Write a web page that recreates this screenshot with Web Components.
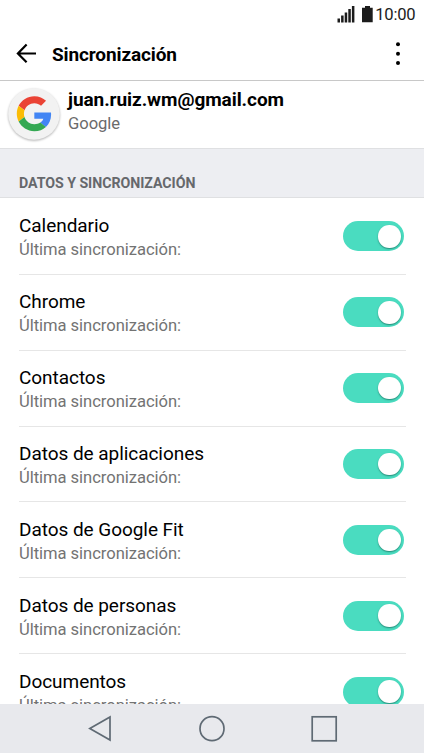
<!DOCTYPE html>
<html lang="es">
<head>
<meta charset="utf-8">
<title>Sincronización</title>
<style>
body {
    margin: 0;
    height: 753px;
    overflow: hidden;
    background: #fff;
    font-family: Roboto, "Liberation Sans", sans-serif;
}
</style>
</head>
<body>
<sync-screen></sync-screen>

<script>
function makeTemplate(html) {
    const template = document.createElement('template');
    template.innerHTML = html;
    return template;
}

class BaseElement extends HTMLElement {
    constructor() {
        super();
        this.attachShadow({mode: 'open'});
        this.shadowRoot.appendChild(this.constructor.template.content.cloneNode(true));
    }
}

class StatusBar extends BaseElement {
    static template = makeTemplate(`
<style>
:host {
    display: flex;
    justify-content: flex-end;
    height: 30px;
    padding-right: 8.5px;
    box-sizing: border-box;
    color: #1c1c1c;
}
svg { display: block; fill: #1c1c1c; }
span {
    font-size: 16.6px;
    line-height: 30px;
    letter-spacing: -0.2px;
    margin-left: 2.5px;
}
</style>
<svg width="36" height="30" viewBox="337 0 36 30">
    <path d="M337.5 18.5h2.5v4h-2.5zM341.1 15.5h2.5v7h-2.5zM344.7 12.5h2.5v10h-2.5zM348.3 9h2.5v13.5h-2.5zM351.9 6h2.5v16.5h-2.5z"/>
    <path d="M362 7.7h3V6h5v1.7h2.7v14.6H362z"/>
</svg>
<span><slot></slot></span>
`);
}
window.customElements.define('status-bar', StatusBar);

class AppBar extends BaseElement {
    static template = makeTemplate(`
<style>
:host {
    display: flex;
    height: 51px;
    box-sizing: border-box;
    border-bottom: 1px solid #c8c8c8;
}
svg { display: block; flex: none; }
h1 {
    flex: 1;
    margin: 0;
    font-size: 19px;
    font-weight: 700;
    letter-spacing: -0.12px;
    line-height: 50px;
    color: #000;
}
</style>
<svg width="52" height="50" viewBox="0 30 52 50">
    <path d="M36 53.5H18M26.6 44.6L17.9 53.5L26.6 62.3" fill="none" stroke="#000" stroke-width="2.2"/>
</svg>
<h1><slot></slot></h1>
<svg width="36" height="50" viewBox="388 30 36 50">
    <circle cx="398" cy="44.3" r="2"/><circle cx="398" cy="53.7" r="2"/><circle cx="398" cy="63" r="2"/>
</svg>
`);
}
window.customElements.define('app-bar', AppBar);

class AccountHeader extends BaseElement {
    static template = makeTemplate(`
<style>
:host {
    display: flex;
    height: 68px;
    box-sizing: border-box;
    border-bottom: 1px solid #dfe0e2;
}
svg { display: block; flex: none; width: 68px; height: 67px; }
.badge { fill: #f2f2f2; filter: drop-shadow(0 1px 1px rgba(0, 0, 0, .3)); }
.name {
    margin-top: 7px;
    font-size: 19px;
    font-weight: 700;
    letter-spacing: -0.06px;
    line-height: 24px;
    color: #000;
}
.type {
    font-size: 16.6px;
    letter-spacing: -0.05px;
    line-height: 24px;
    color: #6b6b6b;
}
</style>
<svg viewBox="0 81 68 67">
    <circle class="badge" cx="34" cy="114" r="25.8"/>
    <g transform="translate(16.8 96.2) scale(.73)">
        <path fill="#ea4335" d="M24 9.5c3.54 0 6.71 1.22 9.21 3.6l6.85-6.85C35.9 2.38 30.47 0 24 0 14.62 0 6.51 5.38 2.56 13.22l7.98 6.19C12.43 13.72 17.74 9.5 24 9.5z"/>
        <path fill="#4285f4" d="M46.98 25.3c0-.9-.05-1.7-.15-3H24V31h12.3c-.7 2.2-2.1 3.9-4.14 5.2l7.73 6c4.51-4.18 7.09-10.36 7.09-16.9z"/>
        <path fill="#fbbc05" d="M10.53 28.59c-.48-1.45-.76-2.99-.76-4.59s.27-3.14.76-4.59l-7.98-6.19C.92 16.46 0 20.12 0 24c0 3.88.92 7.54 2.56 10.78l7.97-6.19z"/>
        <path fill="#34a853" d="M24 48c6.48 0 11.93-2.13 15.89-5.81l-7.73-6c-2.15 1.45-4.92 2.3-8.16 2.3-6.26 0-11.57-4.22-13.47-9.91l-7.98 6.19C6.51 42.62 14.62 48 24 48z"/>
    </g>
</svg>
<div>
    <div class="name"><slot name="name"></slot></div>
    <div class="type"><slot name="type"></slot></div>
</div>
`);
}
window.customElements.define('account-header', AccountHeader);

class SectionTitle extends BaseElement {
    static template = makeTemplate(`
<style>
:host {
    display: block;
    height: 49px;
    box-sizing: border-box;
    padding: 24px 19px 0;
    background: #edeef2;
    border-bottom: 1px solid #dfe0e2;
    font-size: 14.2px;
    font-weight: 700;
    letter-spacing: -0.04px;
    line-height: 20px;
    color: #66686c;
}
</style>
<slot></slot>
`);
}
window.customElements.define('section-title', SectionTitle);

class ToggleSwitch extends BaseElement {
    static template = makeTemplate(`
<style>
:host {
    display: flex;
    flex: none;
    align-items: center;
    justify-content: flex-end;
    width: 61px;
    height: 30px;
    padding-right: 3.5px;
    box-sizing: border-box;
    border-radius: 15px;
    background: #4adcc0;
}
i {
    width: 22.5px;
    height: 22.5px;
    border-radius: 50%;
    background: #fff;
    box-shadow: 0 1px 1.5px rgba(0, 60, 50, .5);
}
</style>
<i></i>
`);
}
window.customElements.define('toggle-switch', ToggleSwitch);

class SyncRow extends BaseElement {
    static template = makeTemplate(`
<style>
:host {
    display: flex;
    justify-content: space-between;
    flex: none;
    height: 75.85px;
    margin: 0 18px 0 19px;
    box-sizing: border-box;
    border-bottom: 1px solid #e6e6e6;
}
.label {
    margin-top: 15.48px;
    font-size: 19px;
    letter-spacing: -0.05px;
    line-height: 24px;
    color: #000;
}
.detail {
    font-size: 16.6px;
    letter-spacing: -0.05px;
    line-height: 24px;
    color: #737373;
}
toggle-switch { margin: 22.48px 2px 0 0; }
</style>
<div>
    <div class="label"><slot></slot></div>
    <div class="detail">Última sincronización:</div>
</div>
<toggle-switch></toggle-switch>
`);
}
window.customElements.define('sync-row', SyncRow);

class NavBar extends BaseElement {
    static template = makeTemplate(`
<style>
:host {
    display: block;
    flex: none;
    height: 49.5px;
    background: #e8e9ed;
}
svg { display: block; }
</style>
<svg width="424" height="49.5" viewBox="0 703.5 424 49.5" fill="none" stroke="#5f6a74" stroke-width="1.7">
    <path d="M110 716.5V739.5L89.8 728z"/>
    <circle cx="212" cy="728.2" r="12"/>
    <rect x="312.2" y="716.3" width="24" height="24"/>
</svg>
`);
}
window.customElements.define('nav-bar', NavBar);

class SyncScreen extends BaseElement {
    static template = makeTemplate(`
<style>
:host {
    display: flex;
    flex-direction: column;
    height: 753px;
}
status-bar, app-bar, account-header, section-title { flex: none; }
main {
    flex: 1;
    min-height: 0;
    display: flex;
    flex-direction: column;
    overflow: hidden;
    padding-top: 1px;
}
</style>
<status-bar>10:00</status-bar>
<app-bar>Sincronización</app-bar>
<account-header>
    <span slot="name">juan.ruiz.wm@gmail.com</span>
    <span slot="type">Google</span>
</account-header>
<section-title>DATOS Y SINCRONIZACIÓN</section-title>
<main></main>
<nav-bar></nav-bar>
`);

    services = [
        'Calendario',
        'Chrome',
        'Contactos',
        'Datos de aplicaciones',
        'Datos de Google Fit',
        'Datos de personas',
        'Documentos'
    ];

    connectedCallback() {
        const list = this.shadowRoot.querySelector('main');
        this.services.forEach((name) => {
            const row = document.createElement('sync-row');
            row.textContent = name;
            list.appendChild(row);
        });
    }
}
window.customElements.define('sync-screen', SyncScreen);
</script>
</body>
</html>
